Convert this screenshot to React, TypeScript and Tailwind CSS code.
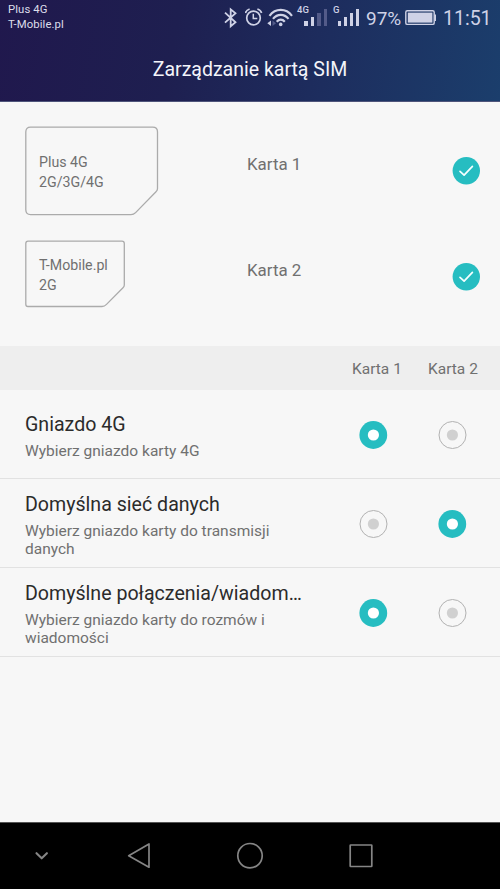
import React from "react";

function BluetoothIcon() {
  return (
    <svg className="h-9 w-[14px]" viewBox="224 0 14 36" fill="none" stroke="#cfd2e6" strokeWidth="1.8">
      <path d="M225 12.7 L235.5 22.3 L230.7 26.3 V9.3 L235.5 13.2 L225 22.6" />
    </svg>
  );
}

function AlarmIcon() {
  return (
    <svg className="ml-[7px] h-9 w-[18px]" viewBox="245 0 18 36" fill="none" stroke="#cfd2e6" strokeWidth="1.7">
      <circle cx="253.5" cy="18" r="6.8" />
      <path d="M253.3 13.7 V18.4 H257.3" strokeWidth="1.5" />
      <path d="M245.4 13 C246 11 247.5 9.7 249.6 9 M257.4 9 C259.5 9.7 261 11 261.6 13" />
    </svg>
  );
}

function WifiIcon() {
  return (
    <svg className="ml-[4px] h-9 w-[27px]" viewBox="267 0 27 36" fill="none" stroke="#cfd2e6" strokeWidth="2.2">
      <path d="M269.5 15.8 C275.5 8 286 8 292 15.8" />
      <path d="M273 18.9 C277.3 13.6 284.2 13.6 288.5 18.9" />
      <path d="M276.7 21.8 C279.2 19 282.3 19 284.8 21.8" />
      <circle cx="280.7" cy="24.4" r="1.8" fill="#cfd2e6" stroke="none" />
      <path d="M267.3 23.3 L271 20.5 V26 Z" fill="#cfd2e6" stroke="none" />
      <path d="M272.5 20.5 L276 23.3 L272.5 26 Z" fill="#535b89" stroke="none" />
    </svg>
  );
}

function Signal({ label, strength }: { label: string; strength: number }) {
  const bars = ["h-[5px]", "h-[9px]", "h-[13px]", "h-[17px]"];
  return (
    <div className="relative flex h-9 items-end gap-[3px] pb-[10px] pl-[7px]">
      <span className={`absolute top-[4px] text-[9.5px] leading-[11px] font-medium ${label === "G" ? "left-[2px]" : "left-0"}`}>{label}</span>
      {bars.map((height, i) => (
        <span key={height} className={`w-[3.6px] ${height} ${i < strength ? "bg-[#cfd2e6]" : "bg-[#535b89]"}`} />
      ))}
    </div>
  );
}

function StatusBar() {
  return (
    <div className="flex h-[37px] pr-[9px] pl-[8px] text-[#cfd2e6]">
      <div className="pt-[2px] text-[11.3px] leading-[15px] tracking-[0.1px] text-[#dddeea]">
        <div>Plus 4G</div>
        <div>T-Mobile.pl</div>
      </div>
      <div className="ml-auto flex h-9">
        <BluetoothIcon />
        <AlarmIcon />
        <WifiIcon />
        <div className="ml-[3px] w-[32px]"><Signal label="4G" strength={2} /></div>
        <div className="ml-[2px] w-[28px]"><Signal label="G" strength={4} /></div>
        <span className="ml-[7px] w-[37px] text-[19px] leading-[37px] whitespace-nowrap">97%</span>
        <svg className="ml-[2px] h-9 w-[32px]" viewBox="405 0 32 36">
          <rect x="405.8" y="10.8" width="28.4" height="13.6" rx="1.5" fill="none" stroke="#cfd2e6" strokeWidth="1.4" />
          <rect x="407.8" y="12.6" width="24.6" height="10" fill="#cfd2e6" />
          <path d="M434.5 14.5 H436 V21 H434.5 Z" fill="#cfd2e6" />
        </svg>
        <span className="ml-[6px] w-[48px] text-[19.5px] leading-[37px] whitespace-nowrap">11:51</span>
      </div>
    </div>
  );
}

function CheckBadge() {
  return (
    <svg className="h-7 w-7" viewBox="0 0 28 28" fill="none">
      <circle cx="14.3" cy="13.8" r="13.7" fill="#26bdc1" />
      <path d="M8 14.3 L12.1 18.1 L20.4 9.4" stroke="#f5ffff" strokeWidth="1.7" strokeLinecap="round" strokeLinejoin="round" />
    </svg>
  );
}

function BigCard() {
  return (
    <svg className="col-start-1 row-start-1 h-[90px] w-[134px]" viewBox="0 0 134 90" fill="none" stroke="#ababab" strokeWidth="1.3">
      <path d="M5.6 1.2 H127.6 Q132.5 1.2 132.5 6 V62.5 Q132.5 64.3 131 65.8 L110.6 86.6 Q108.6 88.6 106 88.6 H5.6 Q.8 88.6 .8 83.8 V6 Q.8 1.2 5.6 1.2 Z" />
    </svg>
  );
}

function SmallCard() {
  return (
    <svg className="col-start-1 row-start-1 h-[68px] w-[101px]" viewBox="0 0 101 68" fill="none" stroke="#ababab" strokeWidth="1.3">
      <path d="M3 1.2 H97 Q99.3 1.2 99.3 3.5 V45 Q99.3 46.6 98 47.8 L81.5 64.4 Q79.5 66.5 77 66.5 H3 Q.8 66.5 .8 64.2 V3.5 Q.8 1.2 3 1.2 Z" />
    </svg>
  );
}

function Radio({ checked }: { checked: boolean }) {
  return (
    <svg className="h-[30px] w-[30px]" viewBox="0 0 30 30" fill="none">
      {checked ? (
        <circle cx="15.3" cy="15" r="13.9" fill="#26bdc1" />
      ) : (
        <circle cx="15.5" cy="15" r="13.5" stroke="#b2b2b2" strokeWidth="1" />
      )}
      <circle cx="15.4" cy="15" r="5.6" fill={checked ? "#ffffff" : "#d0d0d0"} />
    </svg>
  );
}

type Setting = { title: string; lines: string[]; slot: number };

const settings: Setting[] = [
  { title: "Gniazdo 4G", lines: ["Wybierz gniazdo karty 4G"], slot: 1 },
  { title: "Domyślna sieć danych", lines: ["Wybierz gniazdo karty do transmisji", "danych"], slot: 2 },
  { title: "Domyślne połączenia/wiadom…", lines: ["Wybierz gniazdo karty do rozmów i", "wiadomości"], slot: 1 },
];

function SettingRow({ title, lines, slot }: Setting) {
  return (
    <div className="flex h-[89px] items-center border-b border-[#e2e2e2] pt-[2px] pl-[25px]">
      <div className="w-[333px] pt-px">
        <div className="text-[19.6px] leading-[26px] whitespace-nowrap text-[#2b2b2b]">{title}</div>
        <div className="mt-[4px] text-[15.5px] leading-[18px] whitespace-nowrap text-[#707070]">
          {lines.map((line) => <div key={line}>{line}</div>)}
        </div>
      </div>
      <Radio checked={slot === 1} />
      <div className="ml-[49px]"><Radio checked={slot === 2} /></div>
    </div>
  );
}

export default function App() {
  return (
    <div className="flex h-[889px] w-[500px] flex-col overflow-hidden bg-[#f7f7f7] font-['Roboto',sans-serif]">
      <header className="h-[102px] border-b border-[#4f557b] bg-[linear-gradient(100deg,#20184d_0%,#1e1f50_35%,#1d2d5e_65%,#1b3e6c_100%)]">
        <StatusBar />
        <h1 className="pt-[19px] text-center text-[19.5px] leading-7 text-[#f3f4fa]">Zarządzanie kartą SIM</h1>
      </header>

      <section className="h-[244px] pt-[24px] pl-[25px] text-[#707070]">
        <div className="flex h-[114px]">
          <div className="grid w-[222px] content-start">
            <BigCard />
            <div className="col-start-1 row-start-1 pt-[27px] pl-[14px] text-[14.2px] leading-[19.5px]">
              <div>Plus 4G</div>
              <div>2G/3G/4G</div>
            </div>
          </div>
          <div className="w-[205px] pt-[26px] text-[16.9px] leading-6">Karta 1</div>
          <div className="pt-[31px]"><CheckBadge /></div>
        </div>
        <div className="flex">
          <div className="grid w-[222px] content-start">
            <SmallCard />
            <div className="col-start-1 row-start-1 pt-[16px] pl-[14px] text-[14.2px] leading-[19.5px]">
              <div>T-Mobile.pl</div>
              <div>2G</div>
            </div>
          </div>
          <div className="w-[205px] pt-[18px] text-[16.9px] leading-6">Karta 2</div>
          <div className="pt-[23px]"><CheckBadge /></div>
        </div>
      </section>

      <div className="flex h-[44px] items-center bg-[#eeeeee] pl-[352px] text-[15.5px] text-[#707070]">
        <span className="w-[76px] pt-[4px]">Karta 1</span>
        <span className="pt-[4px]">Karta 2</span>
      </div>

      <main className="flex-1">
        {settings.map((setting) => <SettingRow key={setting.title} {...setting} />)}
      </main>

      <nav className="h-[67px] border-t border-[#555555] bg-black">
        <svg className="h-[66px] w-[500px]" viewBox="0 823 500 66" fill="none" stroke="#858585" strokeWidth="1.7" strokeLinejoin="round">
          <path d="M36.5 853.2 L41.7 858.3 L46.9 853.2" strokeWidth="2.1" strokeLinecap="round" />
          <path d="M128.7 855.7 L149 844 V867.2 Z" />
          <circle cx="250" cy="855.7" r="12.2" />
          <rect x="350.2" y="845" width="21.6" height="21.5" rx="0.5" />
        </svg>
      </nav>
    </div>
  );
}
